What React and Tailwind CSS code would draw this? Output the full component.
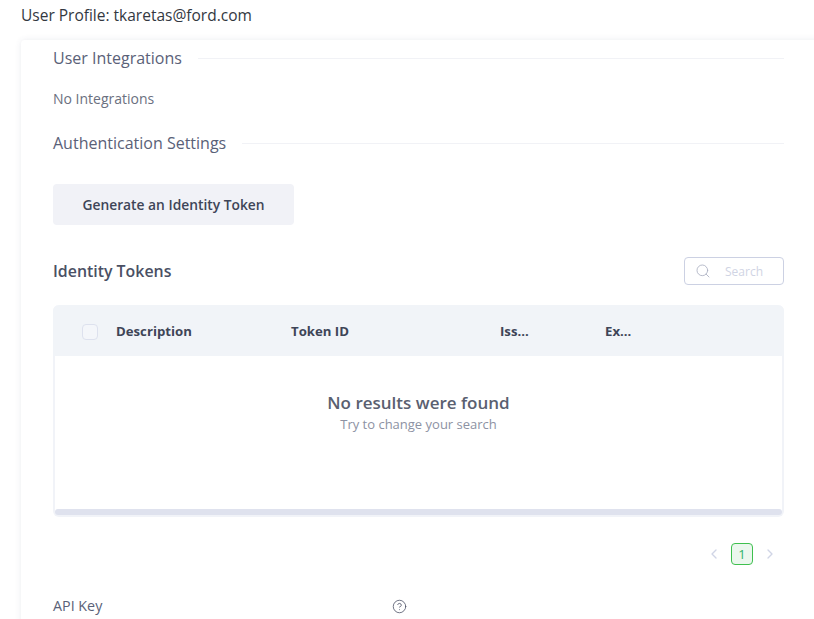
import { ChevronLeft, ChevronRight, Search, CircleHelp } from 'lucide-react';

function SectionTitle({ title }) {
  return (
    <div className="flex items-center gap-4 h-[24px]">
      <span className="text-[16px] text-[#5a6178] whitespace-nowrap">{title}</span>
      <div className="flex-1 h-px bg-[#f1f2f6]"></div>
    </div>
  );
}

function HeaderCell({ label, width }) {
  return (
    <div className={`${width} text-[13.2px] font-bold text-[#3e4557]`}>{label}</div>
  );
}

export default function App() {
  return (
    <div className="h-[619px] w-[814px] overflow-hidden bg-white font-['Open_Sans',sans-serif]">
      <div className="pl-[21px] h-[40px] pt-[4px] text-[15.5px] leading-[22px] text-[#33383f]">
        User Profile: tkaretas@ford.com
      </div>
      <div className="ml-[21px] w-[830px] h-[640px] rounded-[4px] bg-white shadow-[0_0_6px_rgba(60,70,110,0.1)] pl-[32px] pr-[67px] pt-[6px]">
        <SectionTitle title="User Integrations" />
        <div className="mt-[19px] text-[14px] leading-[20px] text-[#6b7080]">No Integrations</div>
        <div className="mt-[22px]">
          <SectionTitle title="Authentication Settings" />
        </div>
        <button className="mt-[29px] block w-[241px] h-[41px] pt-[1px] rounded-[4px] bg-[#f1f2f7] text-[13.8px] font-semibold text-[#3e4557]">
          Generate an Identity Token
        </button>

        <div className="mt-[32px] flex items-center justify-between h-[28px]">
          <span className="pt-[1px] text-[15.9px] font-semibold text-[#4a5064]">Identity Tokens</span>
          <div className="flex items-center w-[100px] h-[28px] rounded-[4px] border border-[#ccd1e3] pl-[10px]">
            <Search size={16} strokeWidth={1.25} className="text-[#a9aec0]" />
            <span className="ml-[14px] pt-[1px] text-[12px] text-[#d0d4e4]">Search</span>
          </div>
        </div>

        <div className="mt-[20px] h-[212px] rounded-[6px] border-2 border-t-0 border-[#f1f3f8] flex flex-col">
          <div className="h-[51px] -mx-[2px] pt-[2px] rounded-t-[6px] bg-[#f1f4f8] flex items-center pl-[29px]">
            <div className="w-[16px] h-[16px] rounded-[4px] border border-[#dde1ee] bg-[#f4f6fa] mr-[18px]"></div>
            <HeaderCell label="Description" width="w-[175px]" />
            <HeaderCell label="Token ID" width="w-[209px]" />
            <HeaderCell label="Iss..." width="w-[105px]" />
            <HeaderCell label="Ex..." width="w-[60px]" />
          </div>
          <div className="flex-1 flex flex-col items-center pt-[35px]">
            <div className="text-[17px] leading-[24px] font-semibold text-[#5a6070]">No results were found</div>
            <div className="text-[13px] leading-[18px] text-[#8d92a3]">Try to change your search</div>
          </div>
          <div className="h-[6px] rounded-[3px] bg-[#dfe2ee]"></div>
        </div>

        <div className="mt-[26px] flex items-center justify-end h-[22px] pr-[6px]">
          <ChevronLeft size={16} strokeWidth={2} className="text-[#d0d5e6]" />
          <div className="mx-[9px] w-[22px] h-[22px] rounded-[4px] border border-[#3fc04f] bg-[#ebf7ee] text-[13px] leading-[20px] text-center text-[#2fb36a]">
            1
          </div>
          <ChevronRight size={16} strokeWidth={2} className="text-[#d0d5e6]" />
        </div>

        <div className="mt-[31px] flex items-center h-[20px]">
          <span className="w-[340px] text-[14.3px] font-medium text-[#5a6178]">API Key</span>
          <CircleHelp size={15} strokeWidth={1.25} className="text-[#4a5064] -translate-x-[1px]" />
        </div>
      </div>
    </div>
  );
}
